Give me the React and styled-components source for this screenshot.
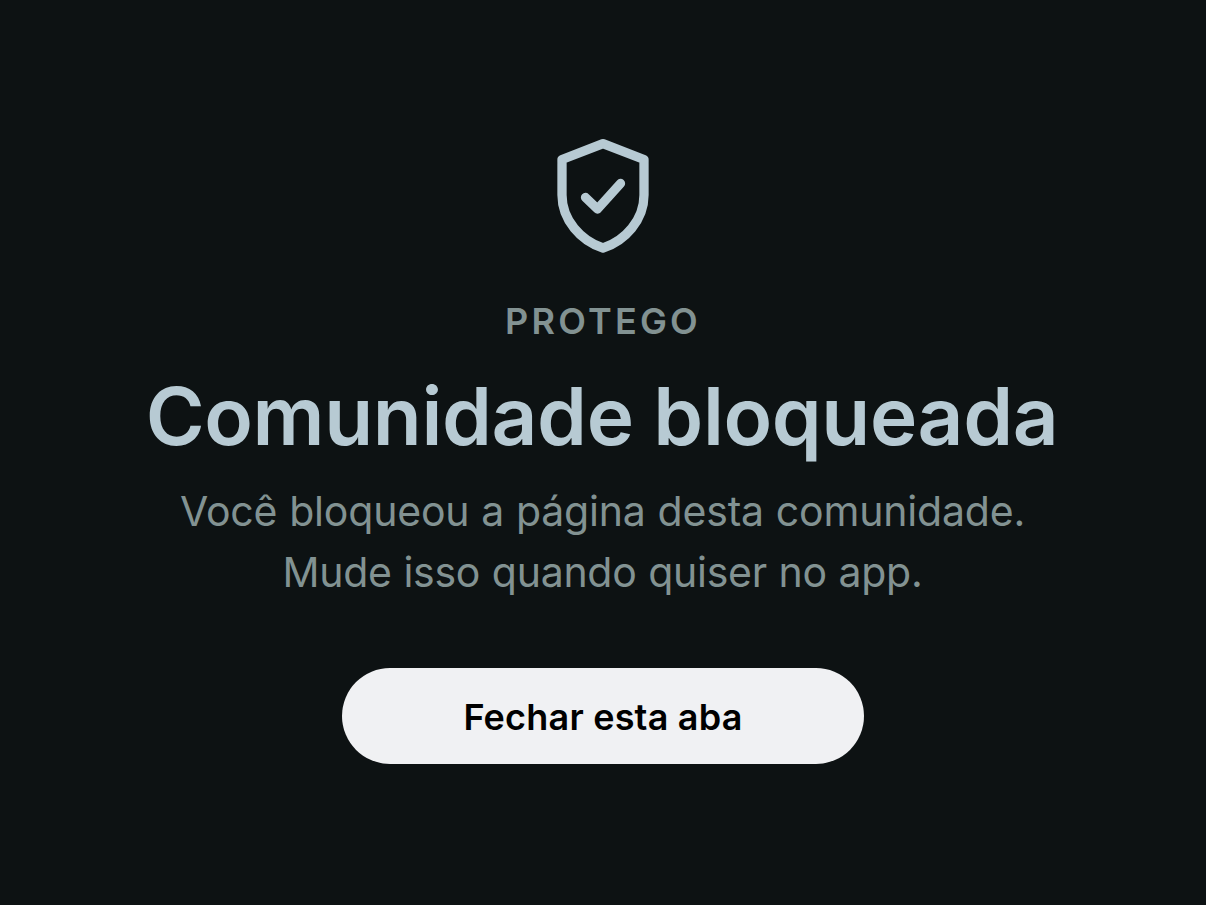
import React from 'react'
import styled, { createGlobalStyle } from 'styled-components';

function App() {

  const closeTab = () => {
    window.close();
  }

  return (
    <>
      <GlobalStyle />
      <Container>
        <ShieldIcon viewBox="0 0 92 114">
          <path d="M46 4.700 L87 20.500 V56 C87 81 68 102 46 109 C24 102 5 81 5 56 V20.500 Z" />
          <path d="M28.500 58.500 L40.500 70 L63.500 44.500" />
        </ShieldIcon>
        <Brand>PROTEGO</Brand>
        <Title>Comunidade bloqueada</Title>
        <Description>
          <Line $spacing="-0.18px">Você bloqueou a página desta comunidade.</Line>
          <Line $spacing="-0.28px">Mude isso quando quiser no app.</Line>
        </Description>
        <CloseButton onClick={closeTab}>Fechar esta aba</CloseButton>
      </Container>
    </>
  )
}

export default App

const GlobalStyle = createGlobalStyle`
  body {
    margin: 0;
    background: #0d1213;
    font-family: Inter, "Liberation Sans", sans-serif;
    -webkit-font-smoothing: antialiased;
  }
`;

const Container = styled.main`
  display: flex;
  flex-direction: column;
  align-items: center;
  box-sizing: border-box;
  width: 100%;
  height: 100vh;
  padding-top: 139px;
`;

const ShieldIcon = styled.svg`
  width: 92px;
  height: 114px;
  fill: none;
  stroke: #b7cad3;
  stroke-width: 9.3;
  stroke-linecap: round;
  stroke-linejoin: round;
`;

const Brand = styled.div`
  margin-top: 45px;
  font-size: 36px;
  font-weight: 600;
  line-height: 46px;
  letter-spacing: 3.2px;
  color: #829292;
`;

const Title = styled.h1`
  margin: 26px 0 0;
  padding-right: 2px;
  font-size: 80px;
  font-weight: 600;
  line-height: 92px;
  letter-spacing: -0.38px;
  white-space: nowrap;
  color: #b7cad3;
`;

const Description = styled.p`
  display: flex;
  flex-direction: column;
  align-items: center;
  margin: 19px 0 0;
  padding-right: 1px;
  font-size: 41px;
  line-height: 61px;
  color: #829292;
`;

const Line = styled.span`
  letter-spacing: ${(props) => props.$spacing};
  word-spacing: 0.5px;
  white-space: nowrap;
`;

const CloseButton = styled.button`
  width: 522px;
  height: 96px;
  margin-top: 65px;
  padding: 2px 0 0;
  border: none;
  border-radius: 48px;
  background: #f0f1f3;
  font-family: inherit;
  font-size: 36px;
  font-weight: 600;
  letter-spacing: 0.2px;
  color: #000;
  cursor: pointer;
`;
